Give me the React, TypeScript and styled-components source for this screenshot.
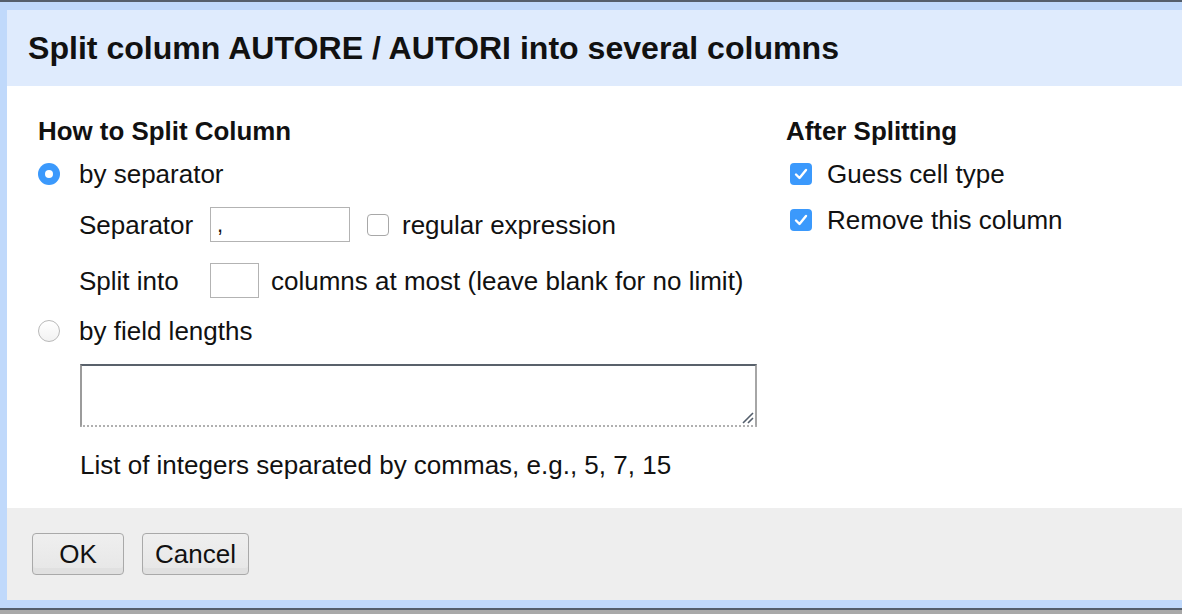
import React from "react";
import styled, { createGlobalStyle } from "styled-components";

const Global = createGlobalStyle`
  html, body { margin: 0; padding: 0; background: #a9a9a9; }
  body { font-family: "Liberation Sans", Arial, sans-serif; color: #111; }
  * { box-sizing: border-box; }
`;

const Page = styled.div`
  width: 1182px;
  height: 614px;
  overflow: hidden;
  border-top: 2px solid #555f6c;
  background: #a9a9a9;
`;

const Dialog = styled.div`
  border: 8px solid #c0d9fb;
  border-left-width: 7px;
  border-right: 0;
  border-bottom-width: 8px;
  background: #fff;
  box-shadow: 0 2px 0 #555f6c;
`;

const Header = styled.div`
  height: 76px;
  background: #dfebfd;
  display: flex;
  align-items: center;
  padding-left: 21px;
  font-size: 32.1px;
  font-weight: bold;
  color: #111;
`;

const Body = styled.div`
  height: 422px;
  display: grid;
  grid-template-columns: 748px 1fr;
  padding: 30px 0 0 31px;
  font-size: 26px;
`;

const Column = styled.div`
  display: flex;
  flex-direction: column;
`;

const Heading = styled.div`
  height: 30px;
  line-height: 30px;
  font-weight: bold;
  font-size: 25.9px;
`;

const Row = styled.div<{ $mt: number; $indent?: number; $h?: number }>`
  display: flex;
  align-items: center;
  margin-top: ${(p) => p.$mt}px;
  margin-left: ${(p) => p.$indent ?? 0}px;
  height: ${(p) => p.$h ?? 32}px;
  font-size: 26px;
  line-height: 30px;
`;

const Radio = styled.span<{ $on?: boolean }>`
  width: 22px;
  height: 22px;
  border-radius: 50%;
  flex: none;
  margin-right: 19px;
  display: flex;
  align-items: center;
  justify-content: center;
  background: ${(p) => (p.$on ? "#3b99fc" : "linear-gradient(#fff, #f2f2f2)")};
  border: ${(p) => (p.$on ? "none" : "1px solid #b9b9b9")};
  &::after {
    content: "";
    display: ${(p) => (p.$on ? "block" : "none")};
    width: 8px;
    height: 8px;
    border-radius: 50%;
    background: #fff;
  }
`;

const Check = styled.span<{ $on?: boolean; $ml?: number; $mr?: number }>`
  width: 22px;
  height: 22px;
  border-radius: 4px;
  flex: none;
  margin-left: ${(p) => p.$ml ?? 0}px;
  margin-right: ${(p) => p.$mr ?? 14}px;
  display: flex;
  align-items: center;
  justify-content: center;
  background: ${(p) => (p.$on ? "#3b99fc" : "#fff")};
  border: ${(p) => (p.$on ? "none" : "1px solid #a8a8a8")};
`;

const Label = styled.span<{ $w?: number }>`
  display: inline-block;
  width: ${(p) => (p.$w ? `${p.$w}px` : "auto")};
  flex: none;
`;

const TextInput = styled.div<{ $w: number }>`
  width: ${(p) => p.$w}px;
  height: 35px;
  border: 1px solid #b3b3b3;
  background: #fff;
  font-size: 22px;
  line-height: 33px;
  padding-left: 6px;
  flex: none;
  margin-right: 12px;
`;

const TextArea = styled.div`
  position: relative;
  margin-top: 17px;
  margin-left: 42px;
  width: 677px;
  height: 63px;
  border-top: 2px solid #59616b;
  border-left: 2px solid #9b9b9b;
  border-right: 2px solid #a6a6a6;
  border-bottom: 2px dotted #b0b0b0;
  background: #fff;
`;

const Grip = styled.svg`
  position: absolute;
  right: 1px;
  bottom: 1px;
`;

const Hint = styled.div`
  margin-top: 23px;
  margin-left: 42px;
  height: 30px;
  line-height: 30px;
  font-size: 26px;
`;

const Footer = styled.div`
  height: 92px;
  background: #eeeeee;
  display: flex;
  align-items: flex-start;
  gap: 18px;
  padding: 25px 0 0 25px;
`;

const Button = styled.button<{ $w: number }>`
  width: ${(p) => p.$w}px;
  height: 42px;
  border: 1px solid #a9a9a9;
  border-radius: 4px;
  background: linear-gradient(#efefef, #e6e6e6);
  font-family: "Liberation Sans", Arial, sans-serif;
  font-size: 26px;
  color: #111;
  padding: 0;
  box-shadow: inset 0 -6px 0 #e0e0e0;
`;

const CheckMark = () => (
  <svg width="14" height="12" viewBox="0 0 14 12">
    <path d="M2 6.5 L5.5 10 L12 2" fill="none" stroke="#fff" strokeWidth="2.4" strokeLinecap="round" strokeLinejoin="round" />
  </svg>
);

export default function App() {
  return (
    <>
      <Global />
      <Page>
        <Dialog>
          <Header>Split column AUTORE / AUTORI into several columns</Header>
          <Body>
            <Column>
              <Heading>How to Split Column</Heading>
              <Row $mt={12}>
                <Radio $on />
                <Label>by separator</Label>
              </Row>
              <Row $mt={17} $indent={41} $h={35}>
                <Label $w={131}>Separator</Label>
                <TextInput $w={140}>,</TextInput>
                <Check $ml={5} $mr={13} />
                <Label>regular expression</Label>
              </Row>
              <Row $mt={21} $indent={41} $h={35}>
                <Label $w={131}>Split into</Label>
                <TextInput $w={49} />
                <Label>columns at most (leave blank for no limit)</Label>
              </Row>
              <Row $mt={17}>
                <Radio />
                <Label>by field lengths</Label>
              </Row>
              <TextArea>
                <Grip width="14" height="14" viewBox="0 0 14 14">
                  <path d="M3 13 L13 3 M8 13 L13 8" stroke="#555f6c" strokeWidth="1.6" />
                </Grip>
              </TextArea>
              <Hint>List of integers separated by commas, e.g., 5, 7, 15</Hint>
            </Column>
            <Column>
              <Heading>After Splitting</Heading>
              <Row $mt={12} $indent={4}>
                <Check $on $mr={15}>
                  <CheckMark />
                </Check>
                <Label>Guess cell type</Label>
              </Row>
              <Row $mt={14} $indent={4}>
                <Check $on $mr={15}>
                  <CheckMark />
                </Check>
                <Label>Remove this column</Label>
              </Row>
            </Column>
          </Body>
          <Footer>
            <Button $w={92}>OK</Button>
            <Button $w={107}>Cancel</Button>
          </Footer>
        </Dialog>
      </Page>
    </>
  );
}
